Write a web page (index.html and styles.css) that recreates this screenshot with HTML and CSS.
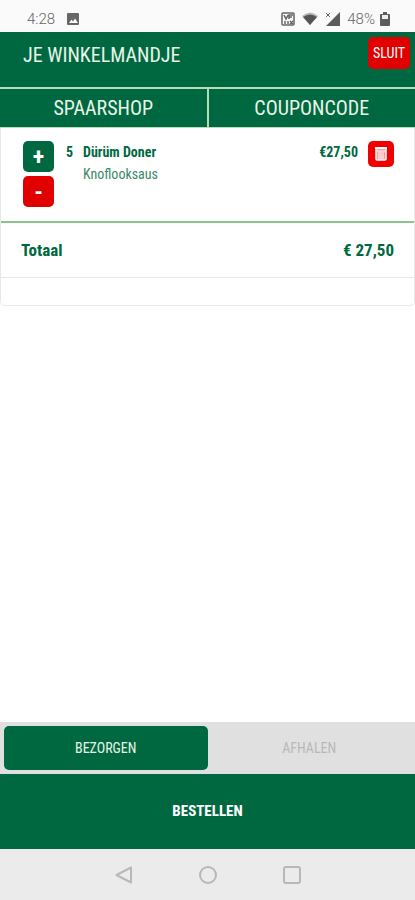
FILE: index.html
```html
<!DOCTYPE html>
<html lang="nl">
<head>
    <meta charset="UTF-8">
    <meta name="viewport" content="width=device-width, initial-scale=1.0">
    <title>Je winkelmandje</title>
    <link rel="stylesheet" href="styles.css">
</head>
<body>

<div class="statusbar">
    <span>4:28</span>
    <svg class="photo" width="12" height="12" viewBox="0 0 12 12">
        <rect width="12" height="12" rx="1" fill="#666"/>
        <path d="M2 10l2.500-3.500 1.500 2 2-3 3 4.500z" fill="#fafafa"/>
    </svg>
    <div class="status-right">
        <svg width="14" height="14" viewBox="0 0 14 14" fill="none" stroke="#666" stroke-width="1.500">
            <rect x="1" y="1" width="12" height="12" rx="1"/>
            <path d="M3 3l2 4 2-4M8 7V3h4M8 5h3M4 9v3M7 12V9M9 12l3-3M9 9l3 3"/>
        </svg>
        <svg width="16" height="13" viewBox="0 0 16 13">
            <path d="M0 4Q8-3 16 4L8 13z" fill="#bbb"/>
            <path d="M1 5Q8 0 15 5L8 13z" fill="#555"/>
        </svg>
        <svg width="15" height="14" viewBox="0 0 15 14">
            <path d="M15 0v14H1z" fill="#5c5c5c"/>
            <path d="M1 1l4 4M5 1L1 5" stroke="#666" stroke-width="1"/>
        </svg>
        <span class="percent">48%</span>
        <svg width="10" height="14" viewBox="0 0 10 14">
            <path d="M3 0h4v2h2q1 0 1 1v10q0 1-1 1H1q-1 0-1-1V3q0-1 1-1h2z" fill="#5c5c5c"/>
            <path d="M2 3h6v4H2z" fill="#eee"/>
        </svg>
    </div>
</div>

<header class="header">
    <h1>JE WINKELMANDJE</h1>
    <button type="button" class="close">SLUIT</button>
</header>

<nav class="tabs">
    <a href="#spaarshop">SPAARSHOP</a>
    <a href="#couponcode">COUPONCODE</a>
</nav>

<main class="main">
    <div class="cart">
        <div class="item">
            <div class="quantity">
                <button type="button" class="plus" aria-label="Meer">+</button>
                <button type="button" class="minus" aria-label="Minder">-</button>
            </div>
            <span class="count">5</span>
            <div class="product">
                <div class="name">Dürüm Doner</div>
                <div class="extra">Knoflooksaus</div>
            </div>
            <span class="price">€27,50</span>
            <button type="button" class="delete" aria-label="Verwijderen">
                <svg width="12" height="14" viewBox="0 0 12 14" fill="none" stroke="#fff">
                    <path d="M0 1h12" stroke-width="2"/>
                    <path d="M1 2v10q0 1 1 1h8q1 0 1-1V2" fill="#f99" stroke-width="1.500"/>
                    <path d="M2 4h8M4 5v7M6 5v7M8 5v7" stroke-width="1"/>
                </svg>
            </button>
        </div>
        <div class="total">
            <span>Totaal</span>
            <span>€ 27,50</span>
        </div>
        <div class="cart-footer"></div>
    </div>
</main>

<div class="delivery">
    <button type="button" class="active">BEZORGEN</button>
    <button type="button">AFHALEN</button>
</div>
<button type="button" class="order">BESTELLEN</button>

<div class="navbar">
    <svg width="18" height="18" viewBox="0 0 18 18"><path d="M16 1.500v15L1.500 9z"/></svg>
    <svg width="18" height="18" viewBox="0 0 18 18"><circle cx="9" cy="9" r="8"/></svg>
    <svg width="18" height="18" viewBox="0 0 18 18"><rect x="1" y="1" width="16" height="16" rx="2"/></svg>
</div>

</body>
</html>
```

FILE: styles.css
```css
* {
    box-sizing: border-box;
}
body {
    margin: 0;
    min-height: 100vh;
    display: flex;
    flex-direction: column;
    font-family: "Roboto Condensed", "Liberation Sans Narrow", Roboto, sans-serif;
    color: #006840;
    background-color: #fff;
}
button {
    padding: 0;
    border: none;
    border-radius: 5px;
    font-family: inherit;
    color: #fff;
    cursor: pointer;
}
.statusbar {
    display: flex;
    align-items: center;
    height: 32px;
    padding: 5px 25px 0 27px;
    font-family: Roboto, sans-serif;
    font-size: 15px;
    font-weight: 300;
    color: #666;
    background-color: #fafafa;
}
.photo {
    margin-left: 12px;
}
.status-right {
    display: flex;
    align-items: center;
    gap: 7px;
    margin-left: auto;
}
.percent {
    margin-right: -2px;
}
.header {
    display: flex;
    justify-content: space-between;
    align-items: flex-start;
    height: 55px;
    padding: 5px 5px 0 23px;
    color: #e8f5e8;
    background-color: #006840;
}
.header h1 {
    margin: 5px 0 0;
    font-size: 20px;
    line-height: 26px;
    font-weight: 400;
}
.close {
    width: 42px;
    height: 32px;
    font-size: 14px;
    background-color: #e00000;
}
.tabs {
    display: flex;
    gap: 2px;
    padding: 2px 0 1px;
    background-color: #b8dcb8;
}
.tabs a {
    flex: 1;
    font-size: 20px;
    line-height: 38px;
    text-align: center;
    text-decoration: none;
    color: #e8f5e8;
    background-color: #006840;
}
.main {
    flex: 1;
}
.cart {
    border: 1px solid #e8e8e8;
    border-top: none;
    border-radius: 0 0 5px 5px;
}
.item {
    display: flex;
    align-items: flex-start;
    min-height: 95px;
    padding: 13px 20px 12px 22px;
    border-bottom: 2px solid #8cc48c;
    font-size: 14px;
    line-height: 22px;
}
.quantity {
    display: flex;
    flex-direction: column;
    gap: 4px;
}
.plus, .minus {
    width: 31px;
    height: 31px;
    font-size: 24px;
    line-height: 28px;
    font-weight: 700;
}
.plus {
    background-color: #006840;
}
.minus {
    background-color: #e00000;
}
.count {
    width: 17px;
    margin-left: 12px;
    font-weight: 700;
}
.product {
    flex: 1;
}
.name, .price {
    font-weight: 700;
}
.extra {
    color: #3c8868;
}
.price {
    margin-right: 10px;
}
.delete {
    display: flex;
    align-items: center;
    justify-content: center;
    width: 26px;
    height: 26px;
    background-color: #f00000;
}
.total {
    display: flex;
    justify-content: space-between;
    padding: 0 20px;
    border-bottom: 1px solid #e8e8e8;
    font-size: 17px;
    line-height: 54px;
    font-weight: 700;
}
.cart-footer {
    height: 27px;
}
.delivery {
    display: flex;
    height: 52px;
    padding: 4px;
    background-color: #e0e0e0;
}
.delivery button {
    flex: 1;
    font-size: 14px;
    color: #b8b8b8;
    background-color: transparent;
}
.delivery .active {
    color: #e8f5e8;
    background-color: #006840;
}
.order {
    height: 75px;
    padding-bottom: 2px;
    border-radius: 0;
    font-size: 15px;
    font-weight: 700;
    background-color: #006840;
}
.navbar {
    display: flex;
    justify-content: center;
    align-items: center;
    gap: 66px;
    height: 51px;
    background-color: #ebebeb;
}
.navbar svg {
    fill: none;
    stroke: #b8b8b8;
    stroke-width: 2;
    stroke-linejoin: round;
}
```
